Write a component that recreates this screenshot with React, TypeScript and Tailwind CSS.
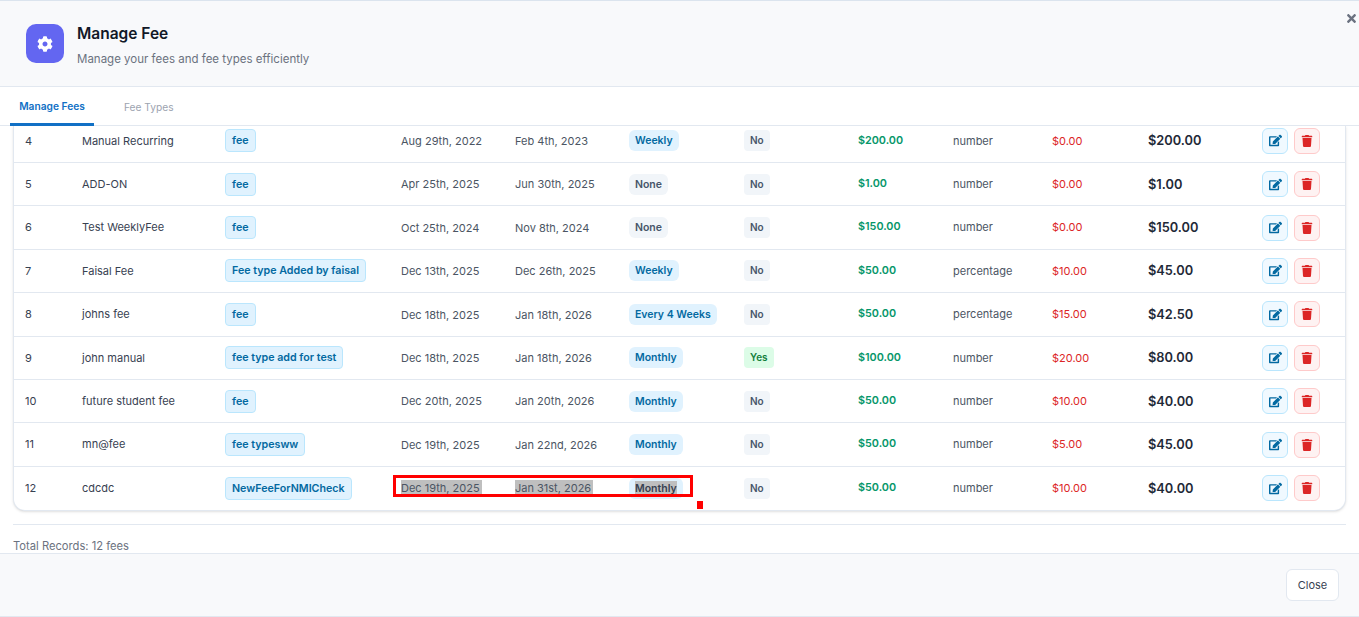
import { FaCog, FaEdit, FaTimes, FaTrash } from "react-icons/fa";

type Fee = {
  id: number;
  name: string;
  type: string;
  start: string;
  end: string;
  freq: string;
  prorated: string;
  amount: string;
  discountType: string;
  discount: string;
  total: string;
};

const fees: Fee[] = [
  { id: 4, name: "Manual Recurring", type: "fee", start: "Aug 29th, 2022", end: "Feb 4th, 2023", freq: "Weekly", prorated: "No", amount: "$200.00", discountType: "number", discount: "$0.00", total: "$200.00" },
  { id: 5, name: "ADD-ON", type: "fee", start: "Apr 25th, 2025", end: "Jun 30th, 2025", freq: "None", prorated: "No", amount: "$1.00", discountType: "number", discount: "$0.00", total: "$1.00" },
  { id: 6, name: "Test WeeklyFee", type: "fee", start: "Oct 25th, 2024", end: "Nov 8th, 2024", freq: "None", prorated: "No", amount: "$150.00", discountType: "number", discount: "$0.00", total: "$150.00" },
  { id: 7, name: "Faisal Fee", type: "Fee type Added by faisal", start: "Dec 13th, 2025", end: "Dec 26th, 2025", freq: "Weekly", prorated: "No", amount: "$50.00", discountType: "percentage", discount: "$10.00", total: "$45.00" },
  { id: 8, name: "johns fee", type: "fee", start: "Dec 18th, 2025", end: "Jan 18th, 2026", freq: "Every 4 Weeks", prorated: "No", amount: "$50.00", discountType: "percentage", discount: "$15.00", total: "$42.50" },
  { id: 9, name: "john manual", type: "fee type add for test", start: "Dec 18th, 2025", end: "Jan 18th, 2026", freq: "Monthly", prorated: "Yes", amount: "$100.00", discountType: "number", discount: "$20.00", total: "$80.00" },
  { id: 10, name: "future student fee", type: "fee", start: "Dec 20th, 2025", end: "Jan 20th, 2026", freq: "Monthly", prorated: "No", amount: "$50.00", discountType: "number", discount: "$10.00", total: "$40.00" },
  { id: 11, name: "mn@fee", type: "fee typesww", start: "Dec 19th, 2025", end: "Jan 22nd, 2026", freq: "Monthly", prorated: "No", amount: "$50.00", discountType: "number", discount: "$5.00", total: "$45.00" },
  { id: 12, name: "cdcdc", type: "NewFeeForNMICheck", start: "Dec 19th, 2025", end: "Jan 31st, 2026", freq: "Monthly", prorated: "No", amount: "$50.00", discountType: "number", discount: "$10.00", total: "$40.00" },
];

function FeeRow({ fee, last }: { fee: Fee; last: boolean }) {
  const isNone = fee.freq === "None";
  const selected = last ? "bg-[#bfbfbf]" : "";
  return (
    <div className={`relative grid grid-cols-[57px_143px_176px_114px_114px_115px_114px_95px_99px_96px_114px_1fr] items-center pl-[11px] text-[11px] text-[#374151] ${last ? "h-[43px]" : "h-[43.4px] border-b border-[#e2e8f0]"}`}>
      <span>{fee.id}</span>
      <span>{fee.name}</span>
      <span>
        <span className="inline-block rounded border border-[#bae6fd] bg-[#e0f2fe] px-[6px] py-[3px] text-[10.7px] leading-[15px] font-semibold text-[#0369a1]">{fee.type}</span>
      </span>
      <span className="text-[#4b5563]"><span className={`py-[0.5px] pr-[2px] ${selected}`}>{fee.start}</span></span>
      <span className="text-[#4b5563]"><span className={`py-[0.5px] pr-[2px] ${selected}`}>{fee.end}</span></span>
      <span>
        <span className={`inline-block rounded-md px-[6px] py-[3px] text-[10.5px] leading-[15px] font-semibold ${isNone ? "bg-[#f1f5f9] text-[#475569]" : "bg-[#e0f2fe] text-[#0369a1]"}`}>
          <span className={last ? "bg-[#bfbfbf] py-[0.5px] text-[#374151]" : ""}>{fee.freq}</span>
        </span>
      </span>
      <span>
        <span className={`inline-block rounded px-[6px] py-[3px] text-[10px] leading-[15px] font-semibold ${fee.prorated === "Yes" ? "bg-[#dcfce7] text-[#15803d]" : "bg-[#f1f5f9] text-[#475569]"}`}>{fee.prorated}</span>
      </span>
      <span className="text-[10.8px] font-semibold text-[#059669]">{fee.amount}</span>
      <span className="text-[#4b5563]">{fee.discountType}</span>
      <span className="text-[#dc2626]">{fee.discount}</span>
      <span className="text-[12.8px] font-semibold text-[#1f2937]">{fee.total}</span>
      <span className="flex gap-[6px]">
        <button type="button" className="flex h-[26px] w-[26px] items-center justify-center rounded-md border border-[#bae6fd] bg-[#f0f9ff] text-[#0369a1]">
          <FaEdit className="h-[13px] w-[13px]" />
        </button>
        <button type="button" className="flex h-[26px] w-[26px] items-center justify-center rounded-md border border-[#fecaca] bg-[#fef2f2] text-[#dc2626]">
          <FaTrash className="h-[12px] w-[12px]" />
        </button>
      </span>
      {last && (
        <>
          <div className="absolute left-[379px] top-[8px] h-[22px] w-[300px] border-[3px] border-[#ff0000]" />
          <div className="absolute left-[683px] top-[34px] h-[8px] w-[6px] bg-[#ff0000]" />
        </>
      )}
    </div>
  );
}

export default function App() {
  return (
    <div className="flex h-[617px] w-full flex-col overflow-hidden border-t border-[#dbe4ee] bg-white font-['Inter',sans-serif]">
      <div className="relative flex h-[86px] items-start border-b border-[#e2e8f0] bg-[#f8f9fb] pl-[26px] pt-[23px]">
        <div className="flex h-[39px] w-[38px] items-center justify-center rounded-[10px] bg-[#6366f1] text-white">
          <FaCog className="h-[16px] w-[16px]" />
        </div>
        <div className="ml-[13px]">
          <h1 className="text-[15.5px] leading-[19px] font-semibold text-[#111827]">Manage Fee</h1>
          <p className="mt-[8px] text-[11.5px] leading-[16px] text-[#6b7280]">Manage your fees and fee types efficiently</p>
        </div>
        <FaTimes className="absolute right-[1px] top-[11px] h-[13px] w-[13px] text-[#6b7280]" />
      </div>

      <div className="flex h-[39px] border-b border-[#e2e8f0] pl-[10px] text-[10.2px]">
        <div className="flex h-[39px] w-[84px] items-center justify-center rounded-t-sm border-b-[3px] border-[#1170c5] pt-[4px] font-semibold text-[#1170c5]">Manage Fees</div>
        <div className="flex h-[38px] items-center pl-[30px] pt-[4px] text-[#9ca3af]">Fee Types</div>
      </div>

      <div className="flex-1 overflow-hidden px-[13px]">
        <div className="overflow-hidden rounded-b-xl border-x border-b border-[#e2e8f0] bg-white shadow-sm">
          <div className="-mt-[6.4px]">
            {fees.map((fee, i) => (
              <FeeRow key={fee.id} fee={fee} last={i === fees.length - 1} />
            ))}
          </div>
        </div>
        <div className="mt-[13px] h-[22px] border-t border-[#e2e8f0] pt-[14px] text-[11.2px] leading-[14px] text-[#6b7280]">
          Total Records: 12 fees
        </div>
      </div>

      <div className="flex h-[64px] items-center justify-end border-y border-[#e2e8f0] bg-[#f8f9fb] pr-[20px]">
        <button type="button" className="h-[32px] w-[53px] rounded-md border border-[#e2e8f0] bg-white text-[11px] text-[#374151]">Close</button>
      </div>
    </div>
  );
}
